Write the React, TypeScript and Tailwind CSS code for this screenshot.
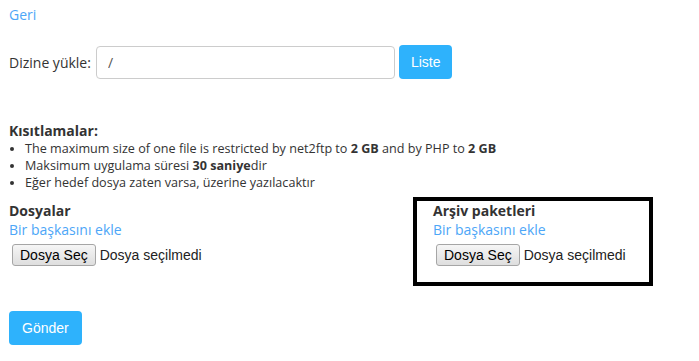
import React from 'react';

const sans = "font-['Open_Sans',sans-serif]";
const arial = "font-['Liberation_Sans',Arial,sans-serif]";

function FileField() {
  return (
    <div className="flex items-center gap-[4px] mt-[5px] ml-[3px]">
      <button
        type="button"
        className={`${arial} h-[22px] px-[7px] text-[14px] leading-none text-black bg-gradient-to-b from-[#f6f6f6] to-[#dedede] border border-[#a6a6a6] rounded-[3px]`}
      >
        Dosya Seç
      </button>
      <span className={`${arial} text-[14px] text-[#222]`}>Dosya seçilmedi</span>
    </div>
  );
}

export default function App() {
  return (
    <div className={`${sans} bg-white w-[699px] h-[361px] text-[#333] pl-[9px] pt-[5px] overflow-hidden`}>
      {/* Back link */}
      <a href="#" className="block text-[14px] leading-[20px] text-[#4da6f7] w-fit">Geri</a>

      {/* Directory row */}
      <div className="flex items-center mt-[20px]">
        <label className="text-[14px] mr-[5px]">Dizine yükle:</label>
        <input
          defaultValue="/"
          className={`${sans} w-[299px] h-[33px] px-[11px] text-[14px] text-[#555] border border-[#cccccc] rounded-[4px] outline-none`}
        />
        <button
          type="button"
          className={`${arial} ml-[4px] h-[34px] px-[12px] text-[14px] text-white bg-[#2eb2fc] rounded-[4px]`}
        >
          Liste
        </button>
      </div>

      {/* Restrictions */}
      <h3 className="mt-[43px] text-[14px] leading-[17px] font-bold text-[#333]">Kısıtlamalar:</h3>
      <ul className="list-disc pl-[16px] text-[12.6px] leading-[17px] mt-[1px]">
        <li>
          The maximum size of one file is restricted by net2ftp to <b>2 GB</b> and by PHP to <b>2 GB</b>
        </li>
        <li>
          Maksimum uygulama süresi <b>30 saniye</b>dir
        </li>
        <li>Eğer hedef dosya zaten varsa, üzerine yazılacaktır</li>
      </ul>

      {/* Upload sections */}
      <div className="flex mt-[6px]">
        <div className="w-[404px] pt-[5px]">
          <h4 className="text-[14px] leading-[17px] font-bold">Dosyalar</h4>
          <a href="#" className="block text-[14px] leading-[18px] mt-[2px] text-[#4da6f7] w-fit">Bir başkasını ekle</a>
          <FileField />
        </div>
        <div className="w-[240px] h-[89px] border-[4px] border-black pl-[16px] pt-[1px]">
          <h4 className="text-[14px] leading-[17px] font-bold">Arşiv paketleri</h4>
          <a href="#" className="block text-[14px] leading-[18px] mt-[2px] text-[#4da6f7] w-fit">Bir başkasını ekle</a>
          <FileField />
        </div>
      </div>

      <button
        type="button"
        className={`${arial} mt-[25px] h-[34px] px-[13px] text-[14px] text-white bg-[#2eb2fc] rounded-[4px]`}
      >
        Gönder
      </button>
    </div>
  );
}
